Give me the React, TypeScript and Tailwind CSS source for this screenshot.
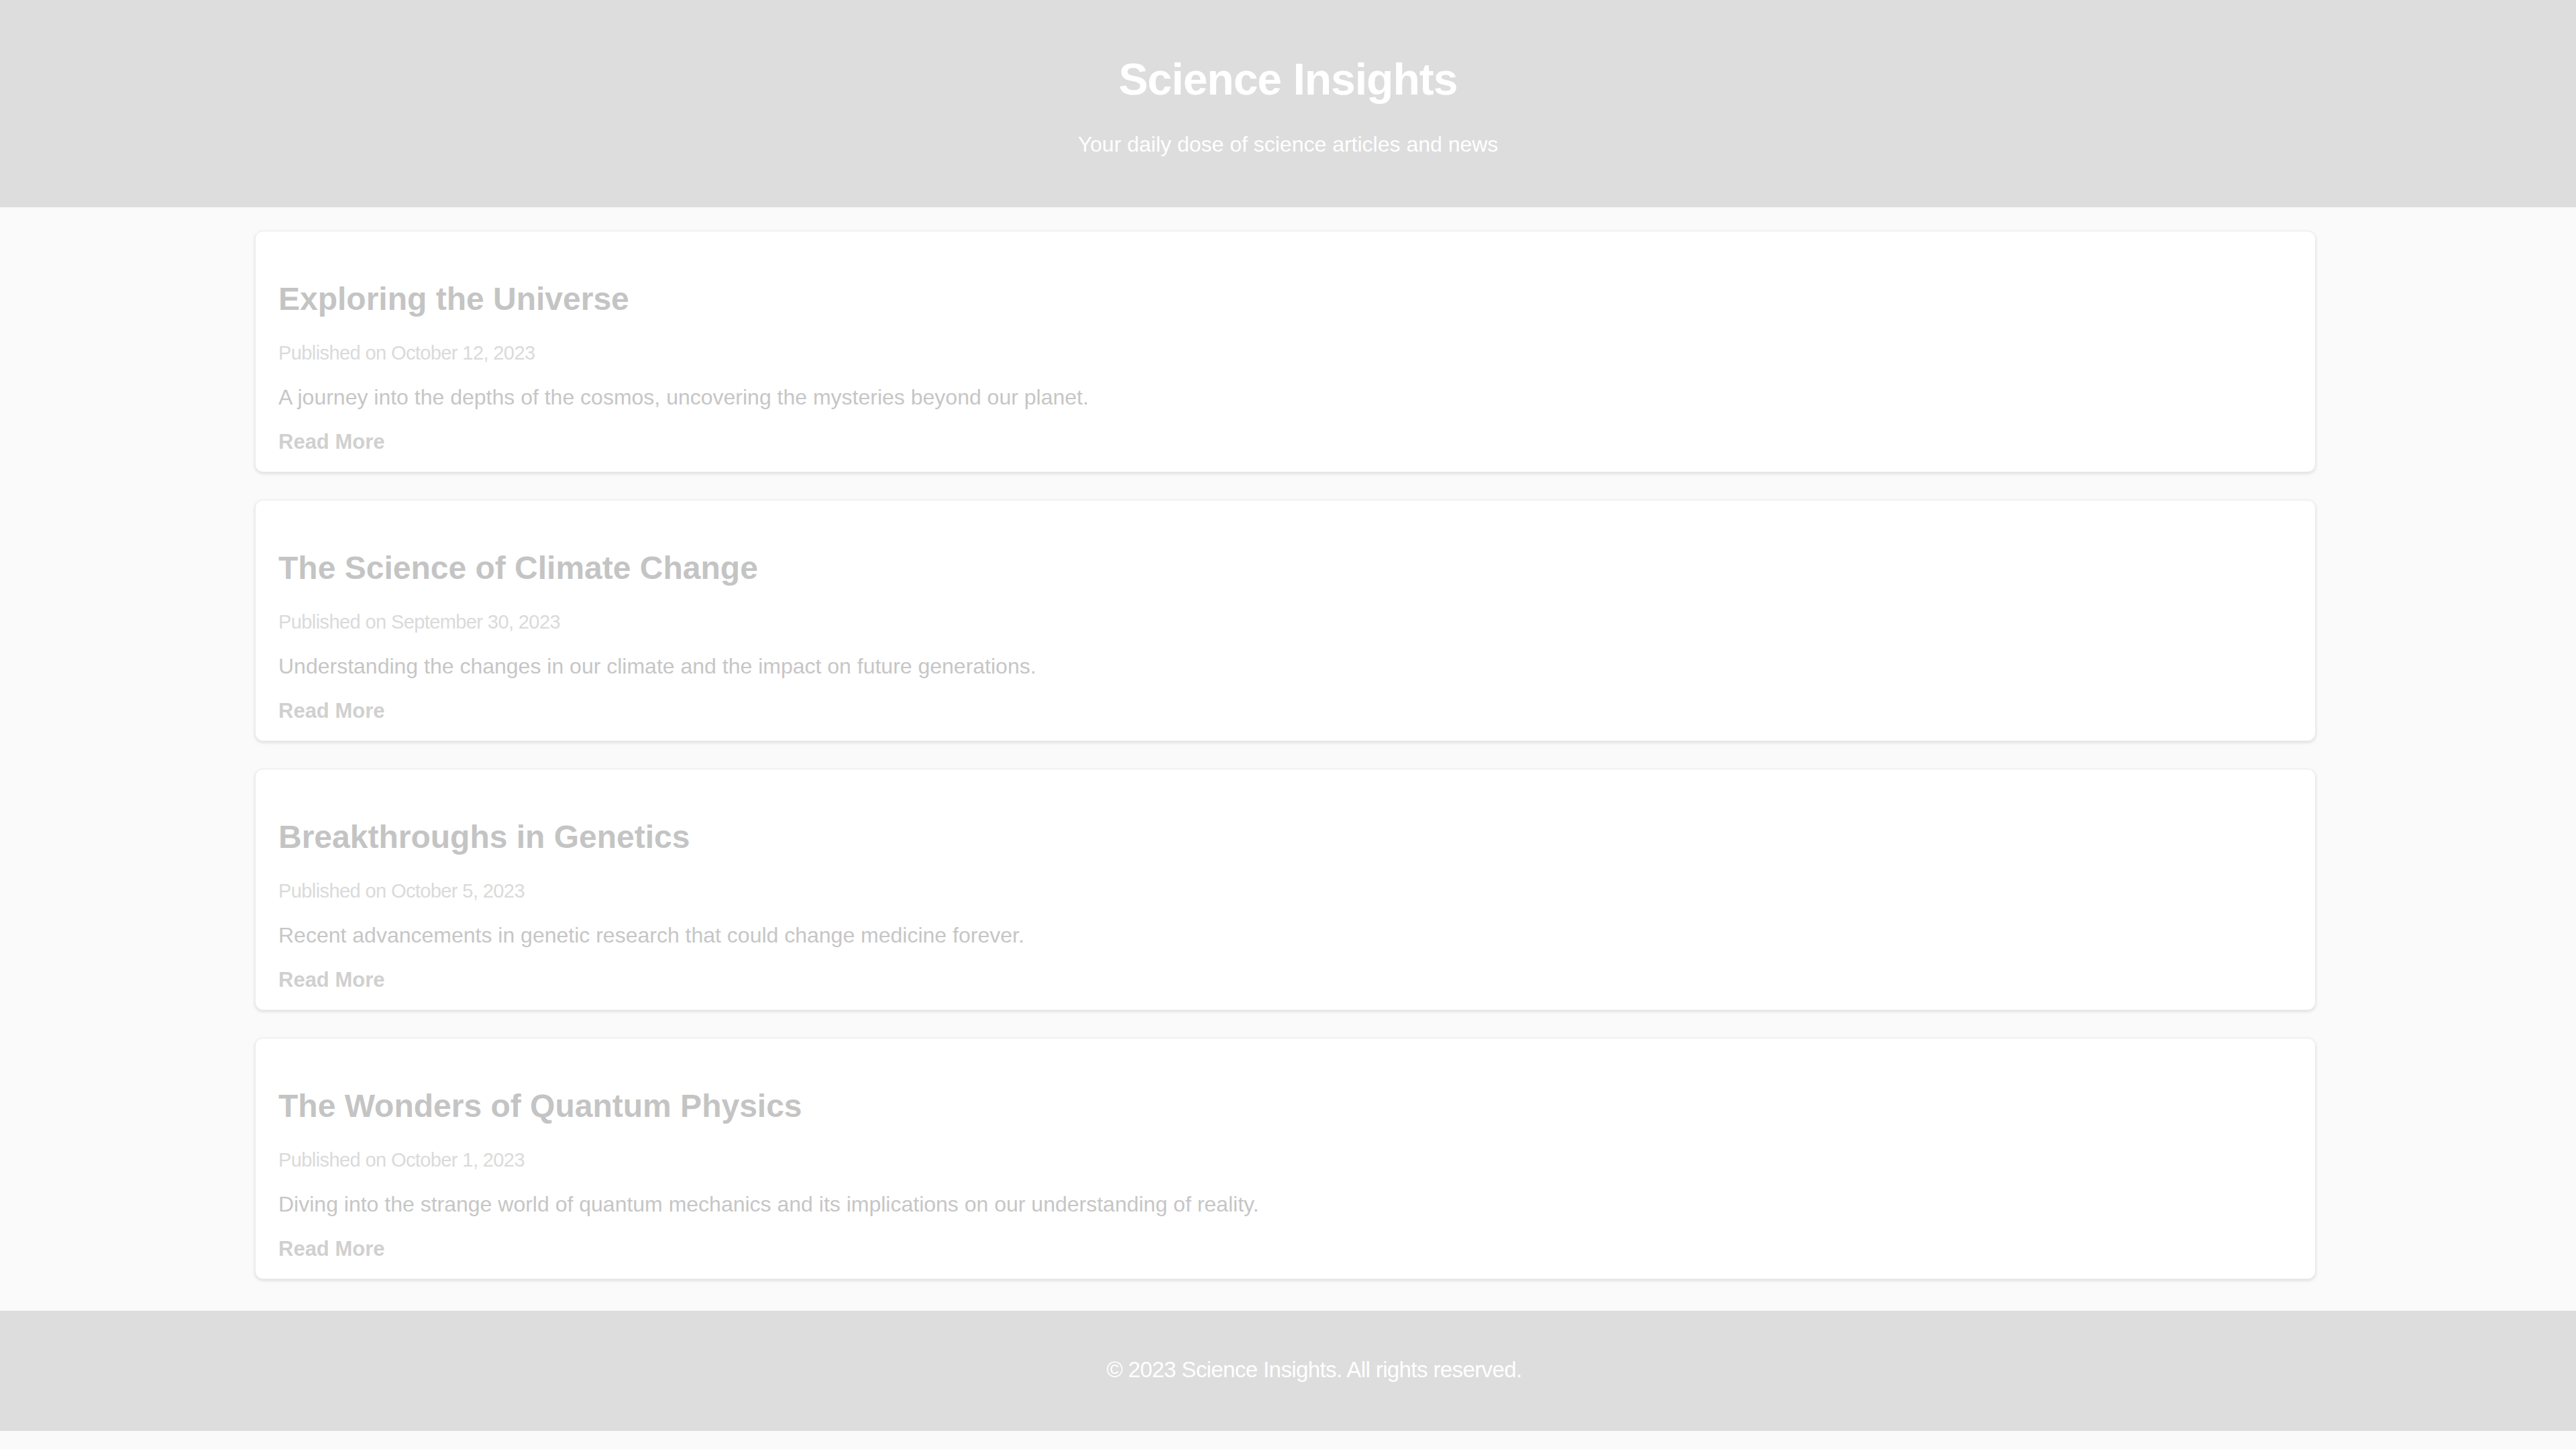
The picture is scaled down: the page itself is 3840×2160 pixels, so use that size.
const articles = [
  {
    title: "Exploring the Universe",
    date: "October 12, 2023",
    summary: "A journey into the depths of the cosmos, uncovering the mysteries beyond our planet.",
  },
  {
    title: "The Science of Climate Change",
    date: "September 30, 2023",
    summary: "Understanding the changes in our climate and the impact on future generations.",
  },
  {
    title: "Breakthroughs in Genetics",
    date: "October 5, 2023",
    summary: "Recent advancements in genetic research that could change medicine forever.",
  },
  {
    title: "The Wonders of Quantum Physics",
    date: "October 1, 2023",
    summary: "Diving into the strange world of quantum mechanics and its implications on our understanding of reality.",
  },
]

const ArticleCard = ({ title, date, summary }: { title: string; date: string; summary: string }) => {
  return (
    <article className="bg-white border border-[#ececec] rounded-[12px] shadow-[0_2px_5px_rgba(0,0,0,0.12)] pt-[72px] pb-[24px] px-[34px]">
      <h2 className="text-[48px] leading-[58px] font-bold text-[#c4c4c4]">{title}</h2>
      <p className="mt-[31px] text-[29px] leading-[40px] text-[#dadada] tracking-[-0.6px]">Published on {date}</p>
      <p className="mt-[26px] text-[32px] leading-[40px] text-[#c6c6c6]">{summary}</p>
      <a href="#" className="block mt-[27px] text-[31px] leading-[40px] font-bold text-[#d0d0d0]">Read More</a>
    </article>
  )
}

const App = () => {
  return (
    <div className="min-h-screen bg-[#fafafa] font-['Liberation_Sans',Arial,sans-serif]">
      <header className="bg-[#dddddd] pt-[78px] pb-[74px] text-center text-white">
        <h1 className="text-[66px] leading-[80px] font-bold tracking-[-1px]">Science Insights</h1>
        <p className="mt-[37px] text-[32px] leading-[40px]">Your daily dose of science articles and news</p>
      </header>
      <main className="w-[3072px] mx-auto pt-[35px] pb-[47px] flex flex-col gap-[41px] relative -left-[4px]">
        {articles.map((a) => (
          <ArticleCard key={a.title} title={a.title} date={a.date} summary={a.summary} />
        ))}
      </main>
      <footer className="bg-[#dddddd] pt-[66px] pb-[69px] text-center text-white">
        <p className="pl-[78px] text-[33px] leading-[44px] tracking-[-0.6px]">© 2023 Science Insights. All rights reserved.</p>
      </footer>
    </div>
  )
}

export default App
